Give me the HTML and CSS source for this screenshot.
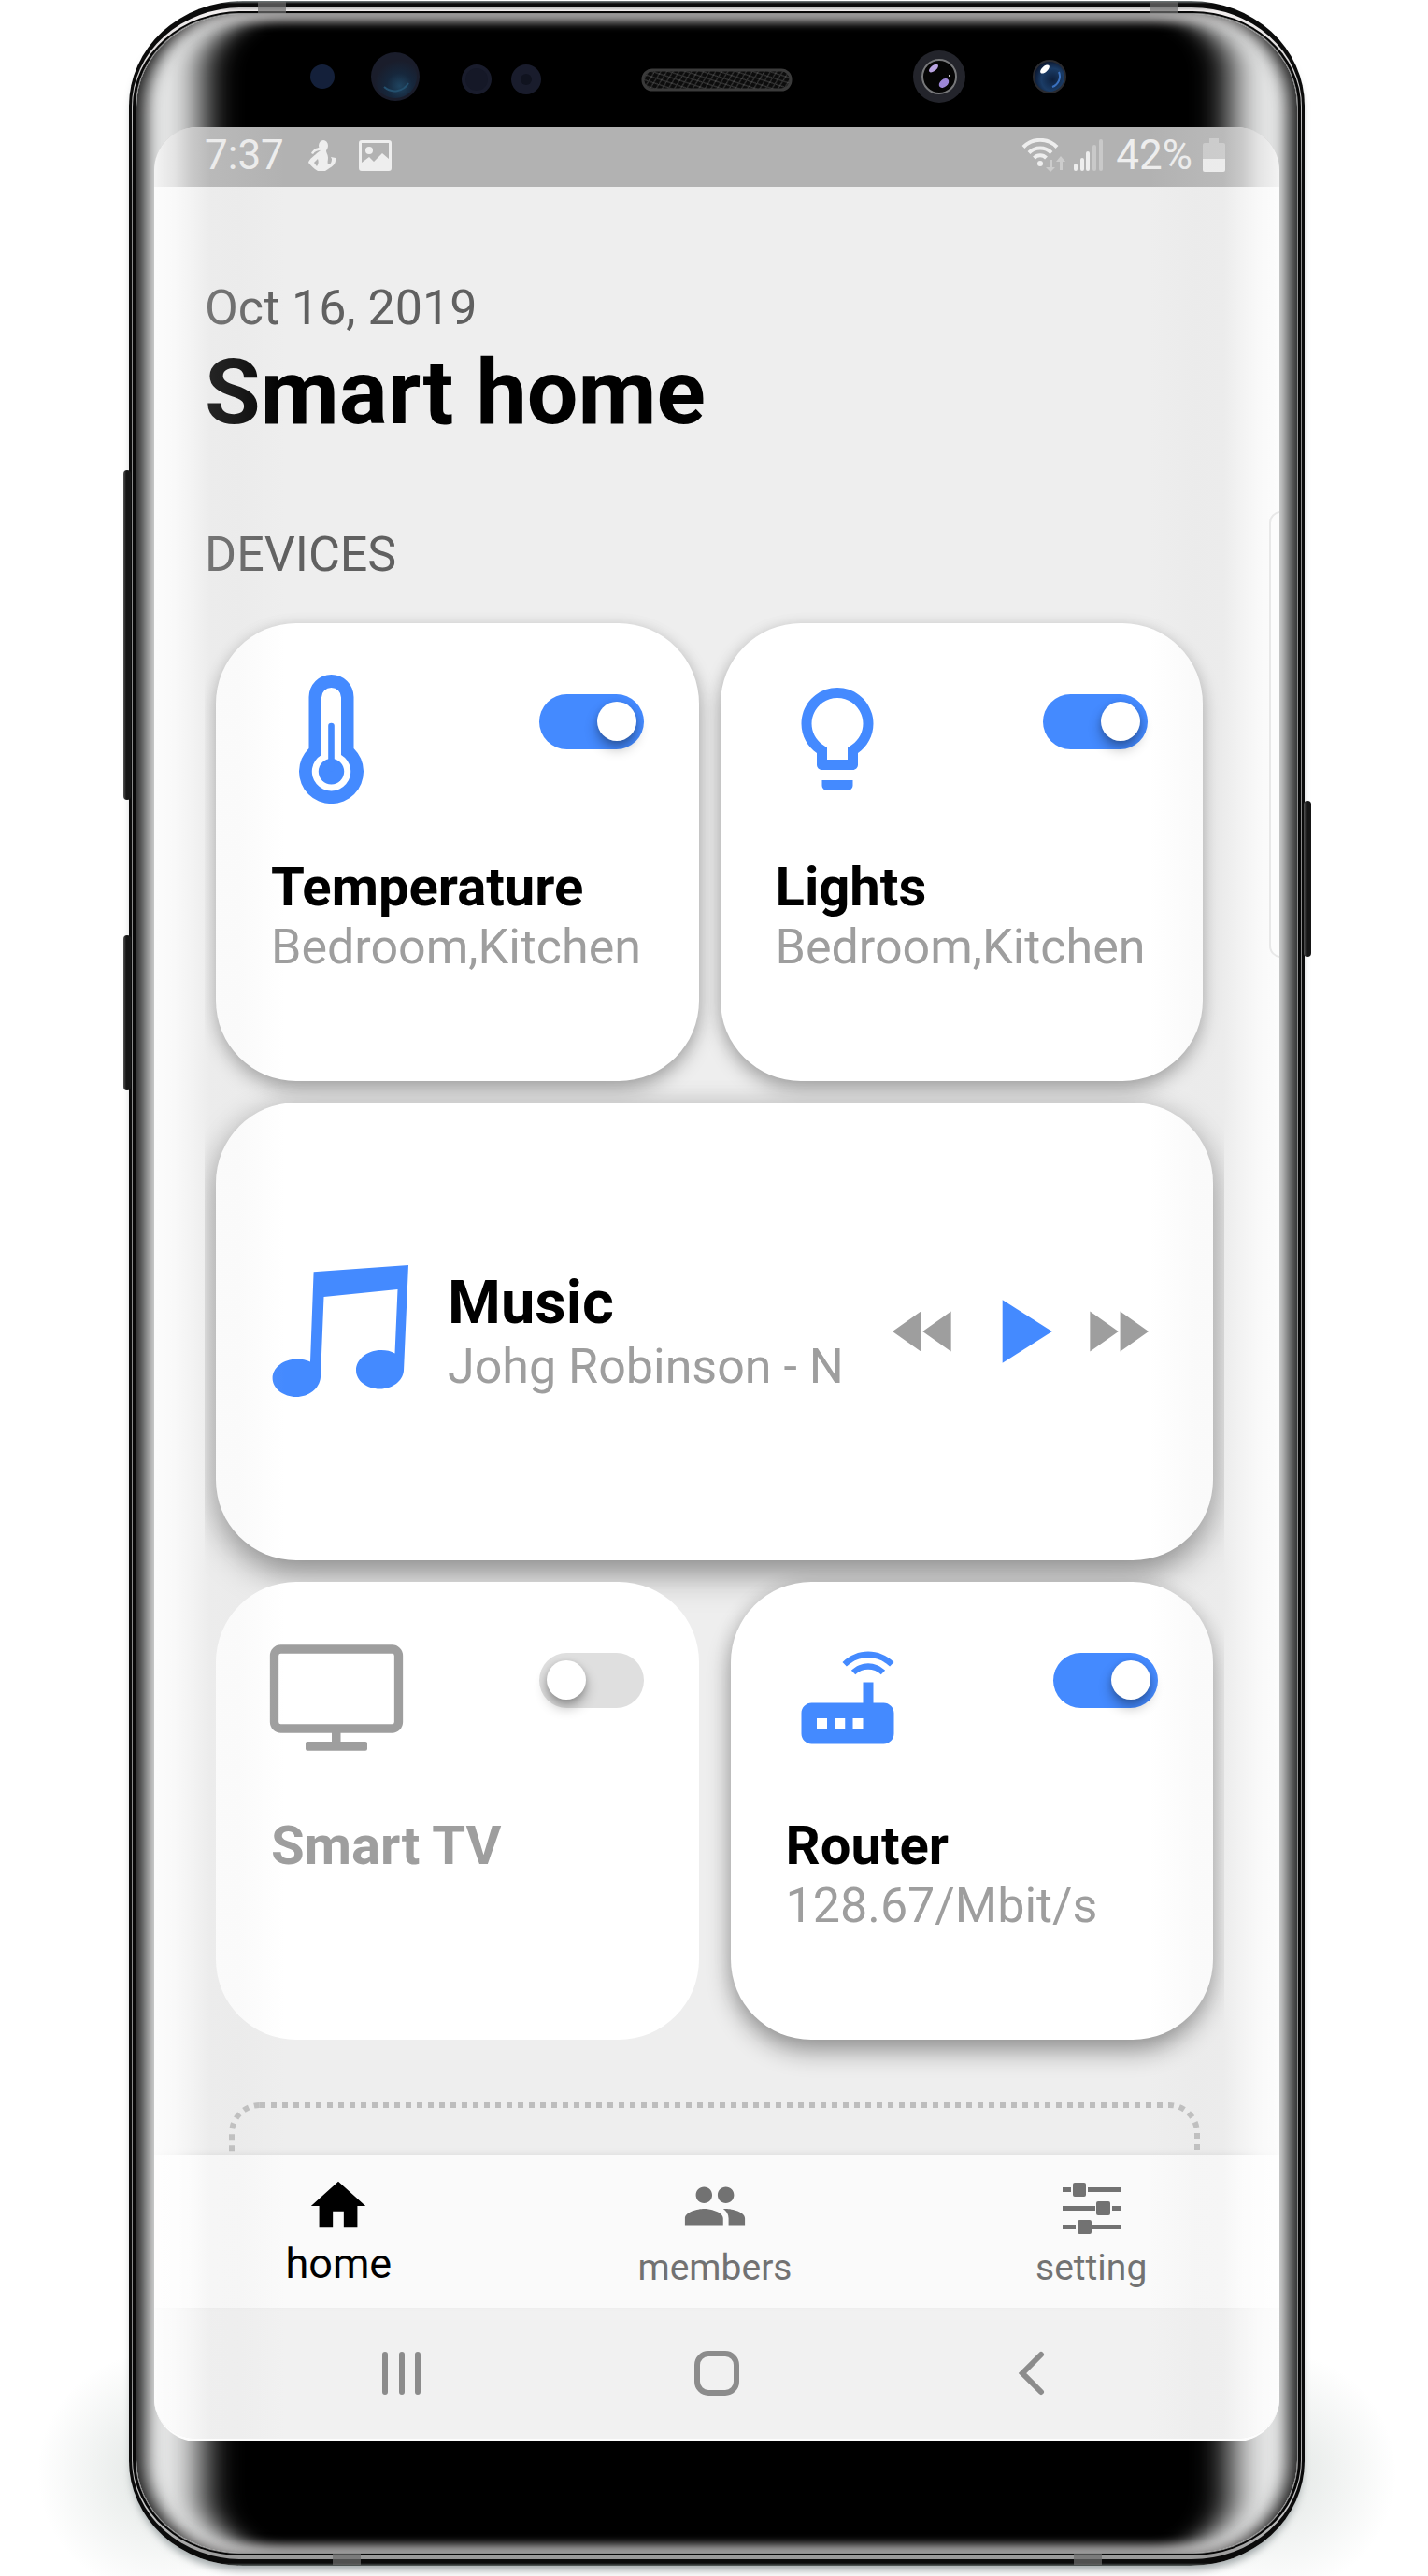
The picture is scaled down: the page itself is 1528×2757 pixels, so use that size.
FILE: index.html
```html
<!DOCTYPE html>
<html lang="en">
<head>
<meta charset="utf-8">
<meta name="viewport" content="width=device-width, initial-scale=1">
<title>Smart home</title>
<link rel="stylesheet" href="styles.css">
</head>
<body>
<div class="stage">
  <div class="phone">
    <span class="key key-volume"></span>
    <span class="key key-assistant"></span>
    <span class="key key-power"></span>
    <span class="antenna antenna-tl"></span>
    <span class="antenna antenna-tr"></span>
    <span class="antenna antenna-bl"></span>
    <span class="antenna antenna-br"></span>
    <div class="rim">
      <div class="rim-inner">
        <div class="glass">
          <svg class="sheen" aria-hidden="true">
            <defs>
              <filter id="soften" x="-10%" y="-10%" width="120%" height="120%">
                <feGaussianBlur stdDeviation="19 6"/>
              </filter>
            </defs>
            <rect class="sheen-core" rx="70" ry="60" filter="url(#soften)"/>
          </svg>

          <svg class="sensors" viewBox="0 0 1204 121" aria-hidden="true">
            <defs>
              <pattern id="mesh" width="9" height="7" patternUnits="userSpaceOnUse" patternTransform="rotate(-20)">
                <rect width="9" height="7" fill="#0c0c0c"/>
                <path d="M0 7L9 0M0 0L9 7" stroke="#4a4a4a" stroke-width="1"/>
              </pattern>
              <radialGradient id="lens" cx="60%" cy="72%" r="60%">
                <stop offset="0" stop-color="#1f4460"/>
                <stop offset=".5" stop-color="#16273c"/>
                <stop offset="1" stop-color="#1a1d2b"/>
              </radialGradient>
              <radialGradient id="iris" cx="60%" cy="60%" r="60%">
                <stop offset="0" stop-color="#0d1f3c"/>
                <stop offset=".6" stop-color="#1b3c66"/>
                <stop offset="1" stop-color="#0c1830"/>
              </radialGradient>
            </defs>
            <circle cx="180" cy="67" r="13" fill="#14203a"/>
            <circle cx="258" cy="67" r="26" fill="#1a1d2b"/>
            <circle cx="258" cy="67" r="23" fill="url(#lens)"/>
            <path d="M246 78a17 17 0 0 0 26-4" fill="none" stroke="#24506e" stroke-width="2"/>
            <circle cx="345" cy="70" r="16" fill="#191c2c"/>
            <circle cx="345" cy="70" r="12" fill="#151827"/>
            <circle cx="398" cy="70" r="16" fill="#191c2c"/>
            <circle cx="398" cy="70" r="6" fill="#10131f"/>
            <rect x="523" y="60" width="158" height="21" rx="10" fill="url(#mesh)" stroke="#3a3a3a" stroke-width="3"/>
            <circle cx="840" cy="67" r="28" fill="#23242b"/>
            <circle cx="840" cy="67" r="18" fill="#050505" stroke="#77787a" stroke-width="2"/>
            <ellipse cx="834" cy="58" rx="6" ry="3" transform="rotate(-40 834 58)" fill="#b9a4e0"/>
            <ellipse cx="845" cy="74" rx="6" ry="4" transform="rotate(-40 845 74)" fill="#9c86d6"/>
            <circle cx="851" cy="66" r="1" fill="#fff"/>
            <circle cx="958" cy="67" r="17" fill="url(#iris)" stroke="#2a2b30" stroke-width="2"/>
            <ellipse cx="953" cy="59" rx="6" ry="3" transform="rotate(-42 953 59)" fill="#fff"/>
            <path d="M968 62a12 12 0 0 1-7 16" fill="none" stroke="#3a70bd" stroke-width="2"/>
          </svg>

          <div class="screen">
            <div class="status-bar">
              <span class="status-text">7:37</span>
              <svg class="status-figure" width="30" height="33" viewBox="0 0 30 33" aria-hidden="true">
                <ellipse cx="16" cy="6" rx="5" ry="6"/>
                <path d="M3 14c2-4 6-6 9-6l1 3c-4 0-6 1-8 4z"/>
                <path fill-rule="evenodd" d="M13 11h6c0 3 2 4 2 8 0 3-1 4 0 7 3 0 4-3 4-6l-1-2 5 1c1 6-3 9-8 12l-3 2h-8l-3-2c-3-2-5-5-7-7 1-4 6-7 9-10zm-3 9l-4 4 3 4c2-3 2-5 1-8z"/>
              </svg>
              <svg class="status-image" width="35" height="33" viewBox="0 0 35 33" aria-hidden="true">
                <path fill-rule="evenodd" d="M3 0h29a3 3 0 0 1 3 3v27a3 3 0 0 1-3 3H3a3 3 0 0 1-3-3V3a3 3 0 0 1 3-3zm0 3v21l8-6 5 5 9-9 7 6V3z"/>
                <circle cx="11" cy="11" r="4"/>
              </svg>
              <svg class="status-wifi" width="48" height="37" viewBox="0 0 48 37" aria-hidden="true">
                <g fill="none" stroke="#eee" stroke-width="4">
                  <path d="M2 9.500a25 25 0 0 1 36 0"/>
                  <path d="M8 15.500a17 17 0 0 1 24 0"/>
                  <path d="M13.500 21a9 9 0 0 1 13 0"/>
                </g>
                <circle cx="20" cy="27" r="3" fill="#eee"/>
                <path fill="#ccc" d="M30 23h3v8h3l-5 5-5-5h4zM41 34h3v-9h3l-5-6-5 6h4z"/>
              </svg>
              <svg class="status-signal" width="31" height="34" viewBox="0 0 31 34" aria-hidden="true">
                <g fill="#eee">
                  <rect y="26" width="4" height="8" rx="2"/>
                  <rect x="7" y="20" width="4" height="14" rx="2"/>
                  <rect x="13" y="13" width="4" height="21" rx="2"/>
                </g>
                <g fill="#c9c9c9">
                  <rect x="20" y="6" width="4" height="28" rx="2"/>
                  <rect x="27" width="4" height="34" rx="2"/>
                </g>
              </svg>
              <span class="status-text">42%</span>
              <svg class="status-battery" width="24" height="36" viewBox="0 0 24 36" aria-hidden="true">
                <path fill="#c9c9c9" d="M7 0h10v5h5a2 2 0 0 1 2 2v15H0V7a2 2 0 0 1 2-2h5z"/>
                <path fill="#eee" d="M0 22h24v12a2 2 0 0 1-2 2H2a2 2 0 0 1-2-2z"/>
              </svg>
            </div>

            <main class="home">
              <header class="heading">
                <p class="date">Oct 16, 2019</p>
                <h1 class="title">Smart home</h1>
              </header>
              <h2 class="section-label">DEVICES</h2>

              <div class="devices">
                <div class="row row-packed">
                  <section class="card">
                    <div class="card-top">
                      <svg class="device-icon" viewBox="0 0 132 132" aria-hidden="true">
                        <path d="M40.500 75.900V21a24 24 0 0 1 48 0v54.900a34.500 34.500 0 1 1-48 0z"/>
                        <path fill="#fff" d="M54 82.900V21.500a10.500 10.500 0 0 1 21 0v61.400a20.700 20.700 0 1 1-21 0z"/>
                        <circle cx="64.500" cy="100.700" r="13.700"/>
                        <path fill="none" stroke="#448aff" stroke-width="6.600" stroke-linecap="round" d="M64.500 52v45"/>
                      </svg>
                      <input class="switch" type="checkbox" id="temperature" checked>
                    </div>
                    <h3 class="card-title"><label for="temperature">Temperature</label></h3>
                    <p class="card-note">Bedroom,Kitchen</p>
                  </section>
                  <section class="card">
                    <div class="card-top">
                      <svg class="device-icon" viewBox="0 0 24 24" aria-hidden="true">
                        <path d="M9 21c0 .55.45 1 1 1h4c.55 0 1-.45 1-1v-1H9v1zm3-19C8.140 2 5 5.140 5 9c0 2.380 1.190 4.470 3 5.740V17c0 .55.45 1 1 1h6c.55 0 1-.45 1-1v-2.260c1.810-1.270 3-3.360 3-5.740 0-3.860-3.140-7-7-7zm2.850 11.100l-.85.6V16h-4v-2.300l-.85-.6C7.800 12.160 7 10.630 7 9c0-2.760 2.240-5 5-5s5 2.240 5 5c0 1.630-.8 3.160-2.150 4.100z"/>
                      </svg>
                      <input class="switch" type="checkbox" id="lights" checked>
                    </div>
                    <h3 class="card-title"><label for="lights">Lights</label></h3>
                    <p class="card-note">Bedroom,Kitchen</p>
                  </section>
                </div>

                <section class="card card-music">
                  <svg class="music-icon" viewBox="0 0 146 142" aria-hidden="true">
                    <path d="M44.600 7.300L146 0l-5 113c-1 11-12 19.500-25.500 19.500S90 124 90 112.500 101.500 91 117 91c5.500 0 10.500 1 14.500 3.500l3-68.500-79 8-3.500 86c-1 12-12.500 21-26 21S.6 132 .6 121 12 100.500 27 100.500c5 0 10 1 14 3z"/>
                  </svg>
                  <div class="track">
                    <h3 class="track-title">Music</h3>
                    <p class="card-note">Johg Robinson - N</p>
                  </div>
                  <div class="player">
                    <button class="player-button" type="button" aria-label="Previous">
                      <svg width="86" height="86" viewBox="0 0 24 24"><path d="M11 18V6l-8.500 6 8.500 6zm.5-6l8.500 6V6l-8.500 6z"/></svg>
                    </button>
                    <button class="player-button player-play" type="button" aria-label="Play">
                      <svg width="116" height="116" viewBox="0 0 24 24"><path d="M8 5v14l11-7z"/></svg>
                    </button>
                    <button class="player-button" type="button" aria-label="Next">
                      <svg width="86" height="86" viewBox="0 0 24 24"><path d="M4 18l8.500-6L4 6v12zm9-12v12l8.500-6L13 6z"/></svg>
                    </button>
                  </div>
                </section>

                <div class="row row-spread">
                  <section class="card card-off">
                    <div class="card-top">
                      <svg class="device-icon" viewBox="0 0 132 132" aria-hidden="true">
                        <rect x="3.500" y="14" width="133" height="85" rx="7" fill="none" stroke="#9e9e9e" stroke-width="9.300"/>
                        <rect x="65" y="100" width="9.500" height="16"/>
                        <rect x="37" y="113" width="66" height="9.700" rx="2"/>
                      </svg>
                      <input class="switch" type="checkbox" id="tv">
                    </div>
                    <h3 class="card-title"><label for="tv">Smart TV</label></h3>
                  </section>
                  <section class="card card-raised">
                    <div class="card-top">
                      <svg class="device-icon" viewBox="0 0 24 24" aria-hidden="true">
                        <path d="M20.200 5.900l.8-.8C19.600 3.700 17.800 3 16 3s-3.600.7-5 2.100l.8.8C13 4.800 14.500 4.200 16 4.200s3 .6 4.200 1.700zm-.9.8c-.9-.9-2.100-1.400-3.300-1.400s-2.400.5-3.300 1.400l.8.8c.7-.7 1.600-1 2.500-1s1.800.3 2.500 1l.8-.8zM19 13h-2V9h-2v4H5c-1.100 0-2 .9-2 2v4c0 1.100.9 2 2 2h14c1.100 0 2-.9 2-2v-4c0-1.100-.9-2-2-2zM8 18H6v-2h2v2zm3.500 0h-2v-2h2v2zm3.500 0h-2v-2h2v2z"/>
                      </svg>
                      <input class="switch" type="checkbox" id="router" checked>
                    </div>
                    <h3 class="card-title"><label for="router">Router</label></h3>
                    <p class="card-note">128.67/Mbit/s</p>
                  </section>
                </div>

                <div class="add-device">
                  <svg class="add-device-outline" aria-hidden="true">
                    <rect class="dashes" rx="30" ry="30"/>
                  </svg>
                </div>
              </div>
            </main>

            <nav class="tabs">
              <a class="tab tab-current" href="#home">
                <svg width="70" height="70" viewBox="0 0 24 24" aria-hidden="true"><path d="M10 20v-6h4v6h5v-8h3L12 3 2 12h3v8z"/></svg>
                home
              </a>
              <a class="tab" href="#members">
                <svg width="70" height="70" viewBox="0 0 24 24" aria-hidden="true"><path d="M16 11c1.660 0 2.990-1.340 2.990-3S17.660 5 16 5c-1.660 0-3 1.340-3 3s1.340 3 3 3zm-8 0c1.660 0 2.990-1.340 2.990-3S9.660 5 8 5C6.340 5 5 6.340 5 8s1.340 3 3 3zm0 2c-2.330 0-7 1.170-7 3.500V19h14v-2.500c0-2.330-4.670-3.500-7-3.500zm8 0c-.29 0-.62.02-.97.05 1.160.84 1.970 1.970 1.970 3.450V19h6v-2.500c0-2.330-4.670-3.500-7-3.500z"/></svg>
                members
              </a>
              <a class="tab" href="#setting">
                <svg width="70" height="70" viewBox="0 0 70 70" aria-hidden="true">
                  <path d="M4 15h9v5H4zM31 15h35v5H31zM4 35h35v5H4zM57 35h9v5h-9zM4 55h14v5H4zM36 55h30v5H36z"/>
                  <rect x="15" y="10" width="14" height="15" rx="2"/>
                  <rect x="40" y="30" width="15" height="15" rx="2"/>
                  <rect x="20" y="50" width="15" height="15" rx="2"/>
                </svg>
                setting
              </a>
            </nav>

            <div class="system-nav">
              <button class="system-button" type="button" aria-label="Recent apps">
                <svg width="48" height="48" viewBox="0 0 48 48"><path d="M6 4v40M24 4v40M41 4v40"/></svg>
              </button>
              <button class="system-button" type="button" aria-label="Home">
                <svg width="48" height="48" viewBox="0 0 48 48"><rect x="3" y="3" width="42" height="42" rx="12"/></svg>
              </button>
              <button class="system-button" type="button" aria-label="Back">
                <svg width="48" height="48" viewBox="0 0 48 48"><path d="M34 4L14 24l20 20"/></svg>
              </button>
            </div>
            <span class="edge-handle"></span>
          </div>
        </div>
      </div>
    </div>
  </div>
</div>
</body>
</html>
```
FILE: styles.css
```css
* {
  box-sizing: border-box;
}

body {
  margin: 0;
  background: #fff;
  color: #000;
  font-family: Roboto, "Liberation Sans", sans-serif;
}

h1, h2, h3, p {
  margin: 0;
}

svg {
  display: block;
}

button {
  padding: 0;
  border: 0;
  background: none;
}

/* Phone body, with a faint glow on the floor at its lower corners */

.stage {
  padding: 1px 132px 11px 138px;
  overflow: hidden;
  background:
    radial-gradient(130px 130px at 170px calc(100% - 110px), rgba(120, 140, 130, .22), transparent),
    radial-gradient(130px 130px at calc(100% - 164px) calc(100% - 110px), rgba(120, 140, 130, .22), transparent);
}

.phone {
  position: relative;
  padding: 7px 3px;
  border-radius: 122px / 112px;
  background: linear-gradient(#7c8586, #0b0b0b 3px, #0b0b0b calc(100% - 3px), #59605f);
  box-shadow: 0 8px 8px -3px rgba(88, 100, 104, .55);
}

.rim {
  padding: 4px 1px;
  border-radius: 118px / 106px;
  background: linear-gradient(#bbb, #f4f0f0 4px, #b9b9b9 120px, #8a8a8a 200px, #8a8a8a calc(100% - 200px), #ccc calc(100% - 60px), #999);
}

.rim-inner {
  padding: 2px 3px;
  border-radius: 116px / 102px;
  background: #080808;
}

.glass {
  position: relative;
  padding: 0 19px 119px;
  border: 1px solid #8f8f8f;
  border-radius: 112px / 100px;
  overflow: hidden;
  background: #e5e6e6;
}

.glass::before {
  content: "";
  position: absolute;
  inset: 0;
  z-index: 1;
  border-radius: 111px / 99px;
  box-shadow:
    inset 22px 0 18px -12px rgba(0, 0, 0, .85),
    inset -22px 0 18px -12px rgba(0, 0, 0, .85),
    inset 0 14px 12px -6px rgba(170, 165, 165, .5),
    inset 0 -14px 12px -6px rgba(170, 165, 165, .5);
  pointer-events: none;
}

.sheen {
  position: absolute;
  inset: 0;
  width: 100%;
  height: 100%;
}

.sheen-core {
  x: 70px;
  y: 5px;
  width: calc(100% - 140px);
  height: calc(100% - 10px);
  fill: #000;
}

.sensors {
  position: relative;
  z-index: 2;
  width: 100%;
}

.key {
  position: absolute;
  width: 8px;
  border-radius: 4px;
  background: linear-gradient(90deg, #555, #161616 3px);
}

.key-volume {
  left: -6px;
  top: 502px;
  height: 353px;
}

.key-assistant {
  left: -6px;
  top: 1000px;
  height: 166px;
}

.key-power {
  right: -7px;
  top: 856px;
  height: 167px;
}

.antenna {
  position: absolute;
  z-index: 1;
  width: 30px;
  height: 12px;
  background: rgba(110, 110, 110, .7);
}

.antenna-tl {
  top: 1px;
  left: 138px;
}

.antenna-tr {
  top: 1px;
  right: 136px;
}

.antenna-bl {
  bottom: 1px;
  left: 218px;
}

.antenna-br {
  bottom: 1px;
  right: 217px;
}

/* Screen */

.screen {
  position: relative;
  z-index: 2;
  border-bottom: 3px solid #fdfdfd;
  border-radius: 46px;
  overflow: hidden;
  background: #eee;
}

.screen::after {
  content: "";
  position: absolute;
  inset: 0;
  background:
    linear-gradient(90deg, rgba(255, 255, 255, .85), rgba(255, 255, 255, .65) 22px, rgba(255, 255, 255, .3) 40px, rgba(225, 225, 225, .16) 60px, rgba(215, 215, 215, .12) 90px, transparent 140px),
    linear-gradient(270deg, rgba(255, 255, 255, .85), rgba(255, 255, 255, .65) 22px, rgba(255, 255, 255, .3) 40px, rgba(225, 225, 225, .16) 60px, rgba(215, 215, 215, .12) 90px, transparent 140px);
  pointer-events: none;
}

.status-bar {
  display: flex;
  align-items: center;
  height: 64px;
  padding: 0 58px 4px 54px;
  background: #b2b2b2;
  color: #eee;
  fill: #eee;
}

.status-text {
  font-size: 44px;
  line-height: 52px;
}

.status-figure {
  margin-left: 26px;
}

.status-image {
  margin-left: 24px;
}

.status-wifi {
  margin-left: auto;
}

.status-signal {
  margin: 0 14px 0 8px;
}

.status-battery {
  margin-left: 11px;
}

.edge-handle {
  position: absolute;
  top: 411px;
  right: -14px;
  z-index: 1;
  width: 25px;
  height: 478px;
  border: 2px solid #e8e8e8;
  border-radius: 14px;
  background: #fcfcfc;
}

.home {
  padding: 99px 59px 0 54px;
}

.date,
.section-label,
.card-note {
  font-size: 52px;
  font-weight: 400;
  line-height: 61px;
}

.date,
.section-label {
  color: #606060;
}

.title {
  font-size: 97px;
  font-weight: 700;
  line-height: 120px;
}

.section-label {
  margin-top: 83px;
}

/* Device cards; shadows stop at the sides of the list */

.devices {
  display: flex;
  flex-direction: column;
  gap: 23px;
  padding: 43px 12px 0;
  overflow-x: clip;
}

.row {
  display: flex;
}

.row-packed {
  gap: 23px;
}

.row-spread {
  justify-content: space-between;
}

.card {
  min-height: 490px;
  padding: 58px 59px;
  border-radius: 86px;
  background: #fff;
  box-shadow: 0 10px 20px rgba(0, 0, 0, .26), 0 2px 16px rgba(0, 0, 0, .1);
}

.row > .card {
  width: calc(50% - 17px);
}

.card-top {
  display: flex;
  justify-content: space-between;
  margin-bottom: 58px;
}

.device-icon {
  width: 132px;
  height: 132px;
  overflow: visible;
  fill: #448aff;
}

.card-title {
  font-size: 58px;
  font-weight: 700;
  line-height: 68px;
}

.card-note {
  color: #9e9e9e;
  white-space: nowrap;
}

.card-off {
  box-shadow: none;
  color: #9e9e9e;
}

.card-off .device-icon {
  fill: #9e9e9e;
}

.card-raised {
  box-shadow: 0 14px 26px rgba(0, 0, 0, .32), 0 2px 20px rgba(0, 0, 0, .12);
}

.switch {
  width: 112px;
  height: 59px;
  margin: 18px 0 0;
  padding: 8px;
  border-radius: 30px;
  background: #dfdfdf;
  appearance: none;
}

.switch::before {
  content: "";
  display: block;
  width: 42px;
  height: 42px;
  border-radius: 50%;
  background: #fff;
  box-shadow: 0 8px 14px rgba(0, 0, 0, .3), 0 2px 6px rgba(0, 0, 0, .15);
}

.switch:checked {
  background: #448aff;
}

.switch:checked::before {
  margin-left: auto;
}

.card-music {
  display: flex;
  align-items: center;
  padding: 0 60px;
  box-shadow: 0 16px 36px rgba(0, 0, 0, .34), 0 4px 30px rgba(0, 0, 0, .14);
}

.music-icon {
  width: 146px;
  height: 142px;
  fill: #448aff;
}

.track {
  margin-left: 42px;
}

.track-title {
  font-size: 65px;
  font-weight: 700;
  line-height: 75px;
}

.player {
  display: flex;
  align-items: center;
  gap: 2px;
  margin-left: auto;
}

.player-button {
  fill: #9e9e9e;
}

.player-play {
  fill: #448aff;
}

.add-device {
  height: 56px;
  margin: 44px 14px 0;
  overflow: hidden;
}

.add-device-outline {
  width: 100%;
  height: 490px;
}

.dashes {
  x: 3px;
  y: 3px;
  width: calc(100% - 6px);
  height: calc(100% - 6px);
  fill: none;
  stroke: #bdbdbd;
  stroke-width: 6px;
  stroke-dasharray: 6 6;
}

/* App tabs and system buttons */

.tabs {
  position: relative;
  display: grid;
  grid-template-columns: repeat(3, 1fr);
  height: 164px;
  margin-left: -4px;
  padding-top: 20px;
  background: #fafafa;
  box-shadow: 0 -2px 6px rgba(0, 0, 0, .06);
}

.tab {
  display: flex;
  flex-direction: column;
  align-items: center;
  color: #727272;
  fill: #727272;
  font-size: 39px;
  line-height: 62px;
  text-decoration: none;
}

.tab-current {
  color: #000;
  fill: #000;
  font-size: 45px;
  line-height: 54px;
}

.system-nav {
  display: flex;
  align-items: center;
  justify-content: space-around;
  height: 140px;
  padding: 0 96px;
  background: #f1f1f1;
}

.system-button {
  fill: none;
  stroke: #8c8c8c;
  stroke-width: 6px;
  stroke-linecap: round;
}
```
